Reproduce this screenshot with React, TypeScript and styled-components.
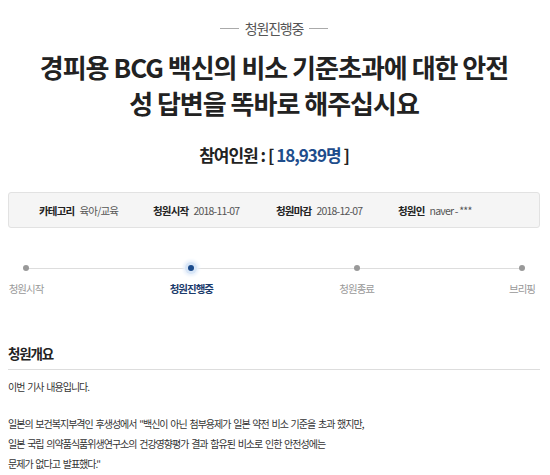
import React from "react";
import styled, { createGlobalStyle } from "styled-components";

const GlobalStyle = createGlobalStyle`
  html, body {
    margin: 0;
    padding: 0;
    background: #fff;
  }
  body {
    font-family: "Noto Sans CJK KR", "Noto Sans", sans-serif;
    color: #333;
  }
`;

const Page = styled.div`
  width: 532px;
  padding: 20px 8px 0 8px;
`;

const StatusLabel = styled.div`
  display: flex;
  align-items: center;
  justify-content: center;
  gap: 6px;
  height: 16px;
  font-size: 14px;
  letter-spacing: -1.2px;
  color: #555;
  &::before,
  &::after {
    content: "";
    width: 19px;
    height: 1px;
    background: #aaa;
  }
`;

const Title = styled.h1`
  margin: 13px 0 0;
  text-align: center;
  font-size: 26px;
  line-height: 36px;
  font-weight: 700;
  color: #222;
  letter-spacing: -1px;
`;

const Count = styled.div`
  margin-top: 22px;
  line-height: 24px;
  text-align: center;
  font-size: 17px;
  font-weight: 700;
  color: #222;
  letter-spacing: -1px;
`;

const CountNumber = styled.span`
  color: #1e4d8c;
`;

const InfoBox = styled.ul`
  list-style: none;
  box-sizing: border-box;
  margin: 25px 0 0;
  padding: 0 0 0 30px;
  height: 36px;
  display: flex;
  align-items: center;
  background: #f5f5f5;
  border: 1px solid #e2e2e2;
  border-radius: 3px;
  font-size: 10.5px;
`;

const InfoItem = styled.li<{ $width?: number }>`
  width: ${(p) => (p.$width ? `${p.$width}px` : "auto")};
  display: flex;
  gap: 5px;
  letter-spacing: -0.8px;
`;

const InfoKey = styled.b`
  color: #222;
`;

const InfoValue = styled.span`
  color: #555;
`;

const Progress = styled.div`
  margin-top: 37px;
  display: flex;
  justify-content: space-between;
  position: relative;
  &::before {
    content: "";
    position: absolute;
    left: 18px;
    right: 18px;
    top: 3px;
    height: 1px;
    background: #ddd;
  }
`;

const Step = styled.div`
  width: 36px;
  display: flex;
  flex-direction: column;
  align-items: center;
  position: relative;
`;

const Dot = styled.span<{ $active?: boolean }>`
  width: 6px;
  height: 6px;
  border-radius: 50%;
  background: ${(p) => (p.$active ? "#1b4b8c" : "#999")};
  box-shadow: ${(p) =>
    p.$active ? "0 0 0 3px #d8e6f7, 0 0 3px 5px #eaf1fb" : "none"};
`;

const StepLabel = styled.span<{ $active?: boolean }>`
  margin-top: 11px;
  line-height: 14px;
  white-space: nowrap;
  font-size: 10.5px;
  letter-spacing: -1px;
  color: ${(p) => (p.$active ? "#1b3b6c" : "#999")};
  font-weight: ${(p) => (p.$active ? 700 : 400)};
`;

const SectionTitle = styled.h2`
  margin: 48px 0 0;
  line-height: 18px;
  padding-bottom: 7px;
  border-bottom: 1px solid #ddd;
  font-size: 13.5px;
  letter-spacing: -1.2px;
  font-weight: 700;
  color: #222;
`;

const Paragraph = styled.p`
  margin: 7px 0 0;
  font-size: 10px;
  line-height: 20px;
  color: #333;
  letter-spacing: -1px;
  word-spacing: 1.5px;
  & + & {
    margin-top: 17px;
  }
`;

const steps = [
  { label: "청원시작" },
  { label: "청원진행중", active: true },
  { label: "청원종료" },
  { label: "브리핑" },
];

const App: React.FC = () => {
  return (
    <Page>
      <GlobalStyle />
      <StatusLabel>청원진행중</StatusLabel>
      <Title>
        경피용 BCG 백신의 비소 기준초과에 대한 안전
        <br />
        성 답변을 똑바로 해주십시요
      </Title>
      <Count>
        참여인원 : [ <CountNumber>18,939명</CountNumber> ]
      </Count>
      <InfoBox>
        <InfoItem $width={114}>
          <InfoKey>카테고리</InfoKey>
          <InfoValue>육아/교육</InfoValue>
        </InfoItem>
        <InfoItem $width={123}>
          <InfoKey>청원시작</InfoKey>
          <InfoValue>2018-11-07</InfoValue>
        </InfoItem>
        <InfoItem $width={122}>
          <InfoKey>청원마감</InfoKey>
          <InfoValue>2018-12-07</InfoValue>
        </InfoItem>
        <InfoItem>
          <InfoKey>청원인</InfoKey>
          <InfoValue>naver - ***</InfoValue>
        </InfoItem>
      </InfoBox>
      <Progress>
        {steps.map((s) => (
          <Step key={s.label}>
            <Dot $active={s.active} />
            <StepLabel $active={s.active}>{s.label}</StepLabel>
          </Step>
        ))}
      </Progress>
      <SectionTitle>청원개요</SectionTitle>
      <Paragraph>이번 기사 내용입니다.</Paragraph>
      <Paragraph>
        일본의 보건복지부격인 후생성에서 "백신이 아닌 첨부용제가 일본 약전 비소 기준을 초과 했지만,
        <br />
        일본 국립 의약품식품위생연구소의 건강영향평가 결과 함유된 비소로 인한 안전성에는
        <br />
        문제가 없다고 발표했다."
      </Paragraph>
    </Page>
  );
};

export default App;
